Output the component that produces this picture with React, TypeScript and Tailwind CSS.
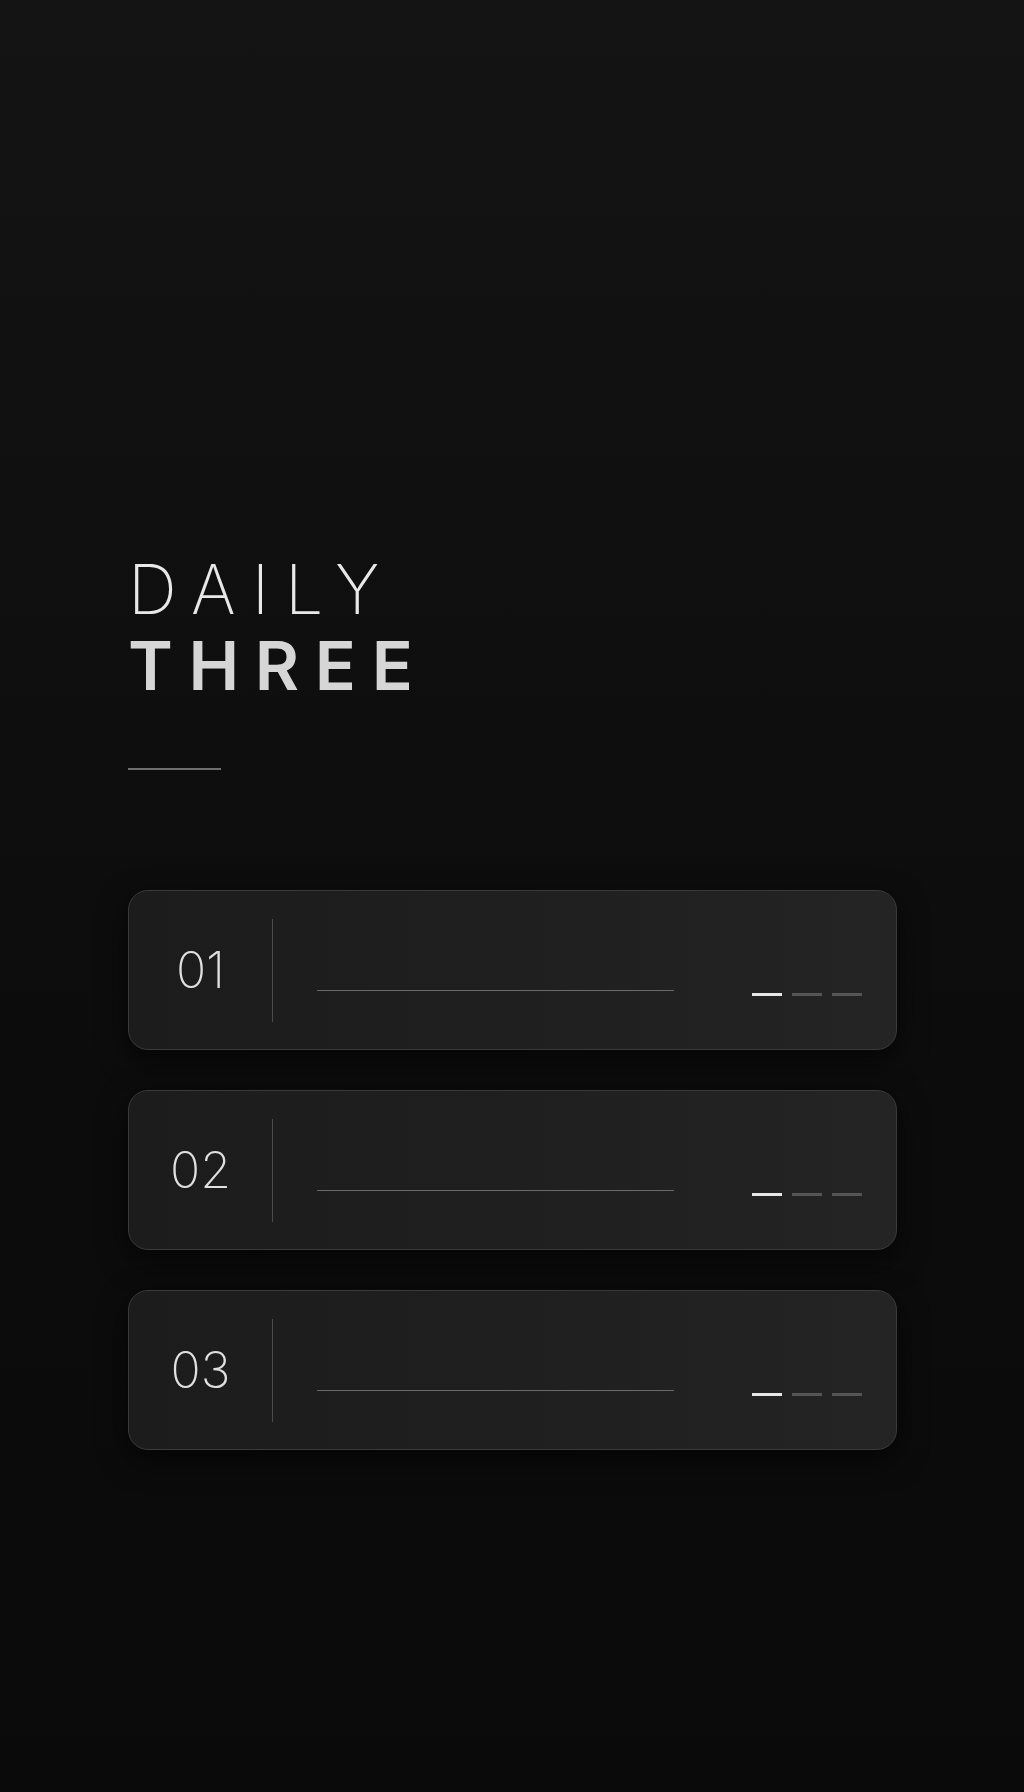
import React from "react";

const tasks = ["01", "02", "03"];

function TaskCard({ num }: { num: string }) {
  return (
    <div className="flex h-[160px] items-center rounded-[20px] border border-[#3a3a3a] bg-gradient-to-r from-[#1c1c1c] via-[#1f1f1f] to-[#242424] shadow-[0_10px_30px_rgba(0,0,0,0.6)]">
      <div className="flex w-[143px] justify-center">
        <span className="text-[50px] font-extralight leading-none text-[#e0e0e0]">
          {num}
        </span>
      </div>
      <div className="h-[103px] w-px bg-[#4a4a4a]" />
      <div className="ml-[44px] mt-[40px] h-px w-[357px] bg-[#6a6a6a]" />
      <div className="ml-auto mr-[34px] mt-[48px] flex gap-[10px]">
        <div className="h-[3px] w-[30px] bg-[#e6e6e6]" />
        <div className="h-[3px] w-[30px] bg-[#555555]" />
        <div className="h-[3px] w-[30px] bg-[#555555]" />
      </div>
    </div>
  );
}

export default function App() {
  return (
    <div
      className="min-h-[1792px] w-full bg-gradient-to-b from-[#141414] via-[#0d0d0d] to-[#0a0a0a] pl-[128px] pr-[127px] pt-[551px]"
      style={{ fontFamily: "Inter, 'Liberation Sans', sans-serif" }}
    >
      {/* Title */}
      <div className="flex flex-col">
        <h1 className="text-[68px] font-extralight leading-[76px] tracking-[0.235em] text-[#e8e8e8]">
          DAILY
        </h1>
        <h2 className="text-[68px] font-semibold leading-[76px] tracking-[0.23em] text-[#d6d6d6]">
          THREE
        </h2>
      </div>
      <div className="mt-[65px] h-[2px] w-[93px] bg-[#6f6f6f]" />

      {/* Tasks */}
      <div className="mt-[120px] flex flex-col gap-[40px]">
        {tasks.map((t) => (
          <TaskCard key={t} num={t} />
        ))}
      </div>
    </div>
  );
}
